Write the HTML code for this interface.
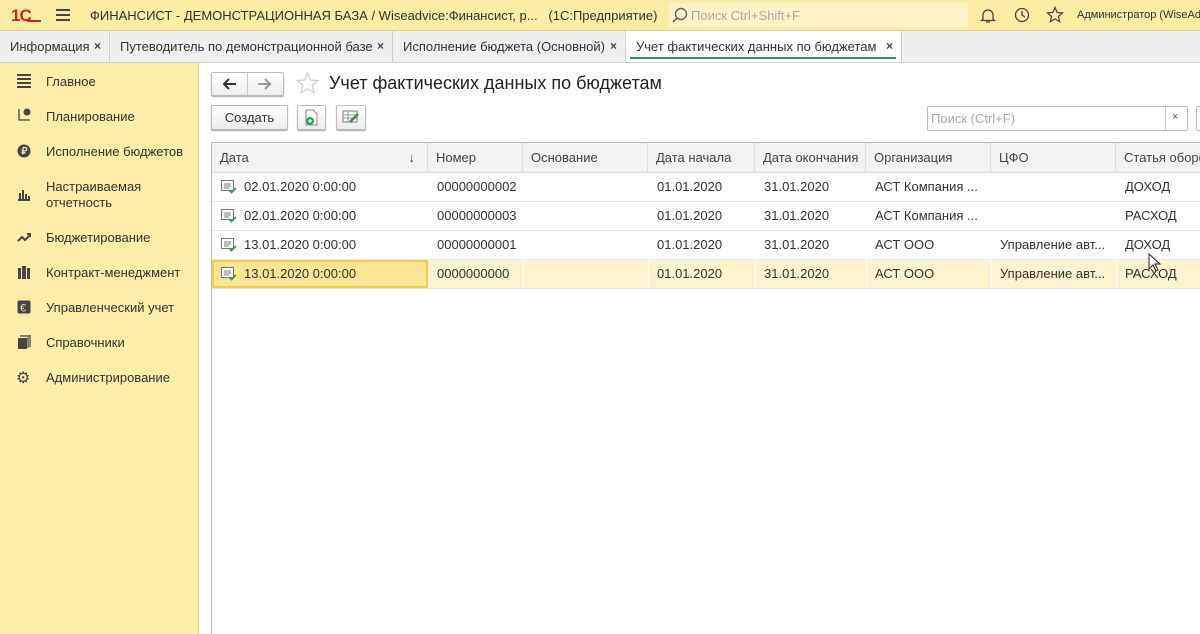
<!DOCTYPE html>
<html><head><meta charset="utf-8"><style>
*{box-sizing:border-box;margin:0;padding:0}
body{width:1200px;height:634px;overflow:hidden;font-family:"Liberation Sans",Arial,sans-serif;font-size:13px;color:#333;background:#fff;position:relative}
.abs{position:absolute}
#top{left:0;top:0;width:1200px;height:31px;background:#fbeca3;border-bottom:1px solid #e0d090}
#tabs{left:0;top:31px;width:1200px;height:32px;background:#efefef;border-bottom:1px solid #cfcfcf}
.tab{position:absolute;top:0;height:31px;line-height:31px;font-size:13px;color:#333;border-right:1px solid #cfcfcf;padding-left:10px}
.tab b{position:absolute;right:8px;font-weight:bold;font-size:12px;color:#444}
#side{left:0;top:63px;width:199px;height:571px;background:#fbeca7;border-right:1px solid #e2d48e}
.mi{position:absolute;left:46px;font-size:13px;color:#333;line-height:16px}
.ic{position:absolute;left:17px;width:14px;height:14px}
.btn{position:absolute;border:1px solid #bbb;border-radius:2px;background:linear-gradient(#fff,#ececec);box-shadow:0 1px 1px #aaa}
.hd{position:absolute;top:143px;height:29px;line-height:29px;padding-left:8px;color:#444;background:#f2f2f2;border-right:1px solid #ddd}
.row{position:absolute;left:212px;width:988px;height:29px;border-bottom:1px solid #e6e6e6}
.c{position:absolute;top:0;line-height:28px;color:#333}
</style></head><body>
<div id="top" class="abs">
 <div class="abs" style="left:11px;top:6px;color:#d0231c;font-weight:bold;font-size:17px;letter-spacing:-1px">1С</div>
 <div class="abs" style="left:27px;top:20px;width:14px;height:2px;background:#d0231c"></div>
 <div class="abs" style="left:56px;top:9px;width:14px;height:2px;background:#444;box-shadow:0 5px 0 #444,0 10px 0 #444"></div>
 <div class="abs" style="left:90px;top:8px;font-size:13px;color:#333">ФИНАНСИСТ - ДЕМОНСТРАЦИОННАЯ БАЗА / Wiseadvice:Финансист, р...&nbsp;&nbsp; (1С:Предприятие)</div>
 <div class="abs" style="left:669px;top:3px;width:299px;height:24px;background:#fdf3c6;border-radius:2px"></div>
 <svg class="abs" style="left:672px;top:7px" width="16" height="16"><circle cx="9" cy="7" r="5.5" fill="none" stroke="#666" stroke-width="1.4"/><path d="M5 11L1 15" stroke="#666" stroke-width="1.6"/></svg>
 <div class="abs" style="left:691px;top:8px;color:#aaa">Поиск Ctrl+Shift+F</div>
 <svg class="abs" style="left:980px;top:7px" width="16" height="17"><path d="M3 12V8a5 5 0 0 1 10 0v4l1.5 1.5h-13z" fill="none" stroke="#444" stroke-width="1.3"/><path d="M6 15h4" stroke="#444" stroke-width="1.3"/></svg>
 <svg class="abs" style="left:1013px;top:6px" width="18" height="18"><circle cx="9" cy="9" r="6.5" fill="none" stroke="#444" stroke-width="1.3"/><path d="M9 5v4l3 2" fill="none" stroke="#444" stroke-width="1.3"/></svg>
 <svg class="abs" style="left:1046px;top:6px" width="18" height="18"><path d="M9 1.5l2.2 5 5.3.4-4 3.5 1.2 5.3L9 13l-4.7 2.7 1.2-5.3-4-3.5 5.3-.4z" fill="none" stroke="#444" stroke-width="1.2"/></svg>
 <div class="abs" style="left:1077px;top:9px;font-size:11px;color:#333;white-space:nowrap">Администратор (WiseAdvice)</div>
</div>
<div id="tabs" class="abs">
 <div class="tab" style="left:0;width:110px">Информация<b>×</b></div>
 <div class="tab" style="left:110px;width:283px">Путеводитель по демонстрационной базе<b>×</b></div>
 <div class="tab" style="left:393px;width:233px">Исполнение бюджета (Основной)<b>×</b></div>
 <div class="tab" style="left:626px;width:276px;background:#fff">Учет фактических данных по бюджетам<b>×</b></div>
 <div class="abs" style="left:630px;top:26px;width:266px;height:2px;background:#1f9a55"></div>
</div>
<div id="side" class="abs">
 <div class="ic" style="top:11px;height:2px;background:#444;box-shadow:0 4px 0 #444,0 8px 0 #444,0 12px 0 #444"></div><div class="mi" style="top:11px">Главное</div>
 <svg class="ic" style="top:45px" viewBox="0 0 14 14"><path d="M2 1v11h11" fill="none" stroke="#444" stroke-width="1.3"/><circle cx="10" cy="4" r="3.5" fill="#444"/></svg><div class="mi" style="top:46px">Планирование</div>
 <svg class="ic" style="top:81px" viewBox="0 0 14 14"><circle cx="7" cy="7" r="6.5" fill="#444"/><path d="M6 3.5v7M6 3.5h2a1.7 1.7 0 0 1 0 3.4H4.5M4.5 8.8h4" stroke="#fbeca7" stroke-width="1.3" fill="none"/></svg><div class="mi" style="top:81px">Исполнение бюджетов</div>
 <svg class="ic" style="top:124px" viewBox="0 0 14 14"><path d="M1 13h12M3 12V6M6 12V3M9 12V7M12 12V9" stroke="#444" stroke-width="2"/></svg><div class="mi" style="top:116px">Настраиваемая<br>отчетность</div>
 <svg class="ic" style="top:167px" viewBox="0 0 14 14"><path d="M1 11l4-4 3 3 5-5M10 4h3v3" stroke="#444" stroke-width="2" fill="none"/></svg><div class="mi" style="top:167px">Бюджетирование</div>
 <svg class="ic" style="top:202px" viewBox="0 0 14 14"><rect x="1" y="3" width="12" height="11" fill="#444"/><rect x="4" y="3" width="6" height="11" fill="#fbeca7"/><rect x="5" y="3" width="4" height="11" fill="#444"/><rect x="5" y="1" width="4" height="2" fill="#444"/></svg><div class="mi" style="top:202px">Контракт-менеджмент</div>
 <svg class="ic" style="top:237px" viewBox="0 0 14 14"><rect x="0.5" y="0.5" width="13" height="13" rx="2" fill="#444"/><text x="3" y="11.5" font-size="11" fill="#fbeca7" font-family="Liberation Sans">€</text></svg><div class="mi" style="top:237px">Управленческий учет</div>
 <svg class="ic" style="top:272px" viewBox="0 0 14 14"><rect x="1" y="3" width="9" height="11" fill="#444"/><path d="M11 2v11M13 0v12M3 1h10" stroke="#444" stroke-width="1.2"/></svg><div class="mi" style="top:272px">Справочники</div>
 <div class="abs" style="left:16px;top:305px;font-size:16px;color:#444">⚙</div><div class="mi" style="top:307px">Администрирование</div>
</div>
<!-- nav -->
<div class="btn" style="left:211px;top:72px;width:73px;height:24px"></div>
<div class="abs" style="left:247px;top:73px;width:1px;height:22px;background:#ccc"></div>
<svg class="abs" style="left:221px;top:77px" width="16" height="14"><path d="M15 7H3M8 2L3 7l5 5" stroke="#333" stroke-width="2" fill="none"/></svg>
<svg class="abs" style="left:257px;top:77px" width="16" height="14"><path d="M1 7h12M8 2l5 5-5 5" stroke="#999" stroke-width="2" fill="none"/></svg>
<svg class="abs" style="left:295px;top:71px" width="25" height="25"><path d="M12.5 2l3 7 7.5.5-5.8 4.8 1.8 7.4-6.5-4-6.5 4 1.8-7.4L2 9.5 9.5 9z" fill="none" stroke="#ccc" stroke-width="1.2"/></svg>
<div class="abs" style="left:329px;top:73px;font-size:18px;color:#222">Учет фактических данных по бюджетам</div>
<div class="btn" style="left:211px;top:105px;width:77px;height:25px;text-align:center;line-height:24px;color:#333">Создать</div>
<div class="btn" style="left:297px;top:105px;width:29px;height:25px"></div>
<svg class="abs" style="left:303px;top:109px" width="16" height="17"><path d="M3 1h7l4 4v11H3z" fill="#fff" stroke="#888"/><circle cx="7" cy="12" r="4" fill="#2fa24a"/><path d="M5 12h4M7 10v4" stroke="#fff" stroke-width="1.3"/></svg>
<div class="btn" style="left:336px;top:105px;width:30px;height:25px"></div>
<svg class="abs" style="left:342px;top:109px" width="18" height="16"><rect x="1" y="2" width="14" height="11" fill="#fff" stroke="#777"/><path d="M1 6h14M1 9h14M6 2v11" stroke="#999"/><path d="M8 13l8-8" stroke="#3a8a3a" stroke-width="2.5"/></svg>
<div class="abs" style="left:927px;top:106px;width:261px;height:25px;border:1px solid #bbb;border-radius:2px;background:#fff"></div>
<div class="abs" style="left:1165px;top:107px;width:1px;height:23px;background:#ccc"></div>
<div class="abs" style="left:931px;top:111px;color:#aaa">Поиск (Ctrl+F)</div>
<div class="abs" style="left:1172px;top:111px;font-size:11px;color:#555">×</div>
<div class="abs" style="left:1196px;top:106px;width:10px;height:25px;border:1px solid #bbb;border-radius:2px"></div>
<!-- table -->
<div class="abs" style="left:211px;top:142px;width:990px;height:492px;border:1px solid #bbb;border-right:none;border-bottom:none"></div>
<div class="abs" style="left:212px;top:172px;width:988px;height:1px;background:#ddd"></div>
<div class="hd" style="left:212px;width:216px">Дата<span style="position:absolute;right:12px">↓</span></div>
<div class="hd" style="left:428px;width:95px">Номер</div>
<div class="hd" style="left:523px;width:125px">Основание</div>
<div class="hd" style="left:648px;width:107px">Дата начала</div>
<div class="hd" style="left:755px;width:111px">Дата окончания</div>
<div class="hd" style="left:866px;width:125px">Организация</div>
<div class="hd" style="left:991px;width:125px">ЦФО</div>
<div class="hd" style="left:1116px;width:90px;white-space:nowrap;overflow:hidden">Статья оборотов</div>

<div class="row" style="top:173px"><div class="c" style="left:32px">02.01.2020 0:00:00</div><div class="c" style="left:225px">00000000002</div><div class="c" style="left:445px">01.01.2020</div><div class="c" style="left:552px">31.01.2020</div><div class="c" style="left:663px">АСТ Компания ...</div><div class="c" style="left:913px">ДОХОД</div></div>
<div class="row" style="top:202px"><div class="c" style="left:32px">02.01.2020 0:00:00</div><div class="c" style="left:225px">00000000003</div><div class="c" style="left:445px">01.01.2020</div><div class="c" style="left:552px">31.01.2020</div><div class="c" style="left:663px">АСТ Компания ...</div><div class="c" style="left:913px">РАСХОД</div></div>
<div class="row" style="top:231px"><div class="c" style="left:32px">13.01.2020 0:00:00</div><div class="c" style="left:225px">00000000001</div><div class="c" style="left:445px">01.01.2020</div><div class="c" style="left:552px">31.01.2020</div><div class="c" style="left:663px">АСТ ООО</div><div class="c" style="left:788px">Управление авт...</div><div class="c" style="left:913px">ДОХОД</div></div>
<div class="row" style="top:260px;background:#fdf3cc"><div class="abs" style="left:0;top:0;width:216px;height:28px;background:#fbe594;border:2px solid #f0cc50"></div><div class="c" style="left:32px">13.01.2020 0:00:00</div><div class="c" style="left:225px">0000000000</div><div class="c" style="left:445px">01.01.2020</div><div class="c" style="left:552px">31.01.2020</div><div class="c" style="left:663px">АСТ ООО</div><div class="c" style="left:788px">Управление авт...</div><div class="c" style="left:913px">РАСХОД</div>
 <div class="abs" style="left:311px;top:0;width:1px;height:28px;background:#fff"></div><div class="abs" style="left:436px;top:0;width:1px;height:28px;background:#fff"></div><div class="abs" style="left:543px;top:0;width:1px;height:28px;background:#fff"></div><div class="abs" style="left:654px;top:0;width:1px;height:28px;background:#fff"></div><div class="abs" style="left:779px;top:0;width:1px;height:28px;background:#fff"></div><div class="abs" style="left:904px;top:0;width:1px;height:28px;background:#fff"></div></div>
<!-- row icons -->
<svg class="abs" style="left:221px;top:180px" width="16" height="14"><rect x="0.5" y="0.5" width="12" height="10" fill="#fff" stroke="#777"/><path d="M3 4h7M3 6h7M3 8h5" stroke="#777"/><path d="M8 10l2.5 2.5L15 8" stroke="#2fa24a" stroke-width="1.8" fill="none"/></svg>
<svg class="abs" style="left:221px;top:209px" width="16" height="14"><rect x="0.5" y="0.5" width="12" height="10" fill="#fff" stroke="#777"/><path d="M3 4h7M3 6h7M3 8h5" stroke="#777"/><path d="M8 10l2.5 2.5L15 8" stroke="#2fa24a" stroke-width="1.8" fill="none"/></svg>
<svg class="abs" style="left:221px;top:238px" width="16" height="14"><rect x="0.5" y="0.5" width="12" height="10" fill="#fff" stroke="#777"/><path d="M3 4h7M3 6h7M3 8h5" stroke="#777"/><path d="M8 10l2.5 2.5L15 8" stroke="#2fa24a" stroke-width="1.8" fill="none"/></svg>
<svg class="abs" style="left:221px;top:267px" width="16" height="14"><rect x="0.5" y="0.5" width="12" height="10" fill="#fff" stroke="#777"/><path d="M3 4h7M3 6h7M3 8h5" stroke="#777"/><path d="M8 10l2.5 2.5L15 8" stroke="#2fa24a" stroke-width="1.8" fill="none"/></svg>
<svg class="abs" style="left:1148px;top:253px" width="14" height="20"><path d="M1 1v15l4-4 3 6 2-1-3-6h5z" fill="#fff" stroke="#222"/></svg>
</body></html>
